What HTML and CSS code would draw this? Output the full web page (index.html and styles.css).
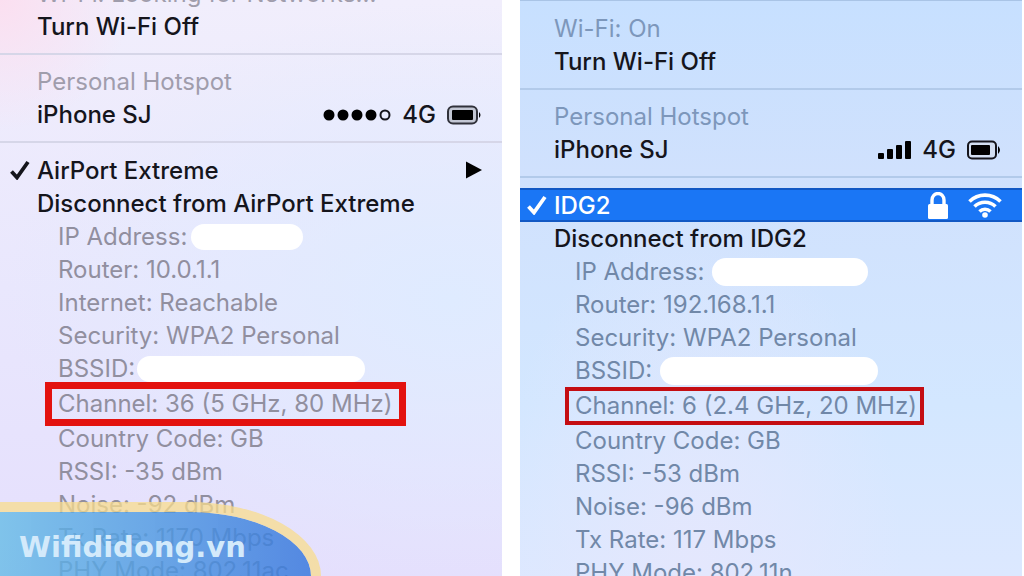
FILE: index.html
```html
<!DOCTYPE html>
<html lang="en">
	<head>
		<meta charset="utf-8" />
		<title>Wi-Fi channel</title>
		<link rel="stylesheet" href="styles.css">
	</head>
	<body>
		<div class="compare">
			<div class="menu airport">
				<p class="row muted">Wi-Fi: Looking for Networks...</p>
				<button type="button" class="row">Turn Wi-Fi Off</button>
				<hr>
				<p class="row muted">Personal Hotspot</p>
				<button type="button" class="row">
					<span class="name">iPhone SJ</span>
					<svg class="dots" width="70" height="14" viewBox="0 0 70 14">
						<circle cx="7" cy="7" r="5.5"/>
						<circle cx="21" cy="7" r="5.5"/>
						<circle cx="35" cy="7" r="5.5"/>
						<circle cx="49" cy="7" r="5.5"/>
						<circle cx="63" cy="7" r="4.5" fill="none" stroke="#15151c" stroke-width="2"/>
					</svg>
					<span class="net">4G</span>
					<svg width="36" height="20" viewBox="0 0 36 20">
						<rect x="2" y="1.5" width="29" height="17" rx="5" fill="#c3c7d4" stroke="#30313a" stroke-width="2"/>
						<rect x="6" y="5" width="21" height="10" rx="1"/>
						<path d="M33 7q3 3 0 6z"/>
					</svg>
				</button>
				<hr>
				<button type="button" class="row network">
					<svg class="check" width="20" height="20" viewBox="0 0 20 20"><path d="M1.5 11.5L7 17.5L18 2" fill="none" stroke="#15151c" stroke-width="3.8"/></svg>
					<span class="name">AirPort Extreme</span>
					<svg width="16" height="18" viewBox="0 0 16 18"><path d="M0 0.5L16 9L0 17.5z"/></svg>
				</button>
				<button type="button" class="row">Disconnect from AirPort Extreme</button>
				<ul>
					<li>IP Address:<span class="blank short"></span></li>
					<li>Router: 10.0.1.1</li>
					<li>Internet: Reachable</li>
					<li>Security: WPA2 Personal</li>
					<li>BSSID:<span class="blank long"></span></li>
					<li class="channel"><span>Channel: 36 (5 GHz, 80 MHz)</span></li>
					<li>Country Code: GB</li>
					<li>RSSI: -35 dBm</li>
					<li>Noise: -92 dBm</li>
					<li>Tx Rate: 1170 Mbps</li>
					<li>PHY Mode: 802.11ac</li>
				</ul>
			</div>
			<div class="menu idg">
				<p class="row muted">Wi-Fi: On</p>
				<button type="button" class="row">Turn Wi-Fi Off</button>
				<hr>
				<p class="row muted">Personal Hotspot</p>
				<button type="button" class="row">
					<span class="name">iPhone SJ</span>
					<svg width="34" height="18" viewBox="0 0 34 18">
						<rect x="0" y="12" width="6" height="6" rx="1"/>
						<rect x="9" y="8" width="6" height="10" rx="1"/>
						<rect x="18" y="4" width="6" height="14" rx="1"/>
						<rect x="27" y="0" width="6" height="18" rx="1"/>
					</svg>
					<span class="net">4G</span>
					<svg width="36" height="20" viewBox="0 0 36 20">
						<rect x="2" y="1.5" width="28" height="17" rx="4" fill="#d3dff2" stroke="#15151c" stroke-width="2"/>
						<rect x="5" y="5" width="19" height="10" rx="1"/>
						<path d="M32 6q4 4 0 8z"/>
					</svg>
				</button>
				<hr>
				<button type="button" class="row network active">
					<svg class="check" width="20" height="20" viewBox="0 0 20 20"><path d="M1.5 11.5L7 17.5L18 2" fill="none" stroke="#fff" stroke-width="3.8"/></svg>
					<span class="name">IDG2</span>
					<svg width="20" height="27" viewBox="0 0 20 27">
						<rect x="0" y="12" width="20" height="15" rx="1.5" fill="#fff"/>
						<path d="M4 13V8a6 6.5 0 0 1 12 0v5" fill="none" stroke="#fff" stroke-width="3.4"/>
					</svg>
					<svg class="wifi" width="34" height="26" viewBox="0 0 34 26" fill="none" stroke="#fff" stroke-width="3.6">
						<path d="M1.5 9.5a22 22 0 0 1 31 0"/>
						<path d="M6.5 14.5a15 15 0 0 1 21 0"/>
						<path d="M11.5 19.5a8 8 0 0 1 11 0"/>
						<circle cx="17" cy="23" r="2.8" fill="#fff" stroke="none"/>
					</svg>
				</button>
				<button type="button" class="row">Disconnect from IDG2</button>
				<ul>
					<li>IP Address:<span class="blank short"></span></li>
					<li>Router: 192.168.1.1</li>
					<li>Security: WPA2 Personal</li>
					<li>BSSID:<span class="blank long"></span></li>
					<li class="channel"><span>Channel: 6 (2.4 GHz, 20 MHz)</span></li>
					<li>Country Code: GB</li>
					<li>RSSI: -53 dBm</li>
					<li>Noise: -96 dBm</li>
					<li>Tx Rate: 117 Mbps</li>
					<li>PHY Mode: 802.11n</li>
				</ul>
			</div>
			<div class="badge"><span>Wifididong.vn</span></div>
		</div>
	</body>
</html>
```
FILE: styles.css
```css
*{
	margin: 0;
	padding: 0;
	box-sizing: border-box;
}
body{
	background: #fff;
	font-family: Inter, "Liberation Sans", sans-serif;
	font-size: 24px;
	color: #15151c;
}
.compare{
	position: relative;
	display: grid;
	grid-template-columns: 1fr 1fr;
	gap: 18px;
	height: 100vh;
	padding-right: 2px;
	overflow: hidden;
}
.menu{
	min-width: 0;
	overflow: hidden;
	white-space: nowrap;
}
.airport{
	background:
		radial-gradient(circle at 0 0, #fbdff0 0, rgba(251,223,240,0) 130px),
		radial-gradient(ellipse at 90% 52%, #dfebff 0, rgba(223,235,255,0) 70%),
		linear-gradient(#f1eefc, #e9e7fd 50%, #e5dffd);
}
.idg{
	padding-top: 11px;
	border-top: 1px solid #a9c4e6;
	background:
		radial-gradient(ellipse at 35% 100%, #e4e7fd 0, rgba(228,231,253,0) 45%),
		linear-gradient(#c7e0ff, #d0e1fd 30%, #d3e7ff 70%, #dce8ff);
}
/* the list is scrolled, the first line is half hidden */
.airport .row:first-child{
	margin-top: -23px;
}
.row{
	display: flex;
	align-items: center;
	width: 100%;
	height: 33px;
	padding: 0 20px 0 37px;
	border: none;
	background: none;
	font: inherit;
	font-weight: 500;
	color: inherit;
	text-align: left;
}
.idg .row{
	padding-left: 34px;
}
.row.network{
	height: 34px;
}
.row.muted{
	font-weight: 400;
	color: #a09dac;
}
.idg .row.muted{
	color: #7d97bb;
}
.name{
	flex: 1;
}
.net{
	margin: 0 10px;
}
.check{
	margin: 0 7px 0 -27px;
}
.idg .active{
	background: #1a76f5;
	border-top: 2px solid #1258c4;
	border-bottom: 2px solid #1258c4;
	color: #fff;
}
.wifi{
	margin-left: 20px;
}
hr{
	height: 2px;
	margin: 10px 0;
	border: none;
	background: #d6d6e8;
}
.idg hr{
	background: #b2caea;
}
ul{
	padding-left: 58px;
	list-style: none;
	color: #918f9f;
}
.idg ul{
	padding-left: 55px;
	color: #7188a8;
}
li{
	display: flex;
	align-items: center;
	height: 33px;
}
.channel{
	height: 37px;
}
.channel span{
	margin-left: -6px;
	padding: 0 6px;
	line-height: 30px;
	outline: 7px solid #e3120f;
}
.idg .channel span{
	padding-right: 3px;
	outline: 4px solid #c40d12;
}
.blank{
	height: 26px;
	border-radius: 13px;
	background: #fff;
}
.short{
	width: 112px;
	margin-left: 4px;
}
.long{
	width: 228px;
	margin-left: 2px;
}
.idg .blank{
	height: 28px;
	border-radius: 14px;
	margin-left: 8px;
}
.idg .short{
	width: 156px;
}
.idg .long{
	width: 218px;
}
.badge{
	position: absolute;
	left: 0;
	bottom: 0;
	width: 321px;
	height: 74px;
	padding: 20px 0 0 19px;
	border: solid rgba(248,220,140,0.75);
	border-width: 10px 10px 0 0;
	border-radius: 0 150px 0 0 / 0 84px 0 0;
	background: linear-gradient(90deg, rgba(104,188,230,0.82), rgba(56,120,220,0.84)) padding-box;
	font-family: "DejaVu Sans", sans-serif;
	font-size: 29px;
	font-weight: 700;
	line-height: 30px;
	color: #d3eafb;
}
```
